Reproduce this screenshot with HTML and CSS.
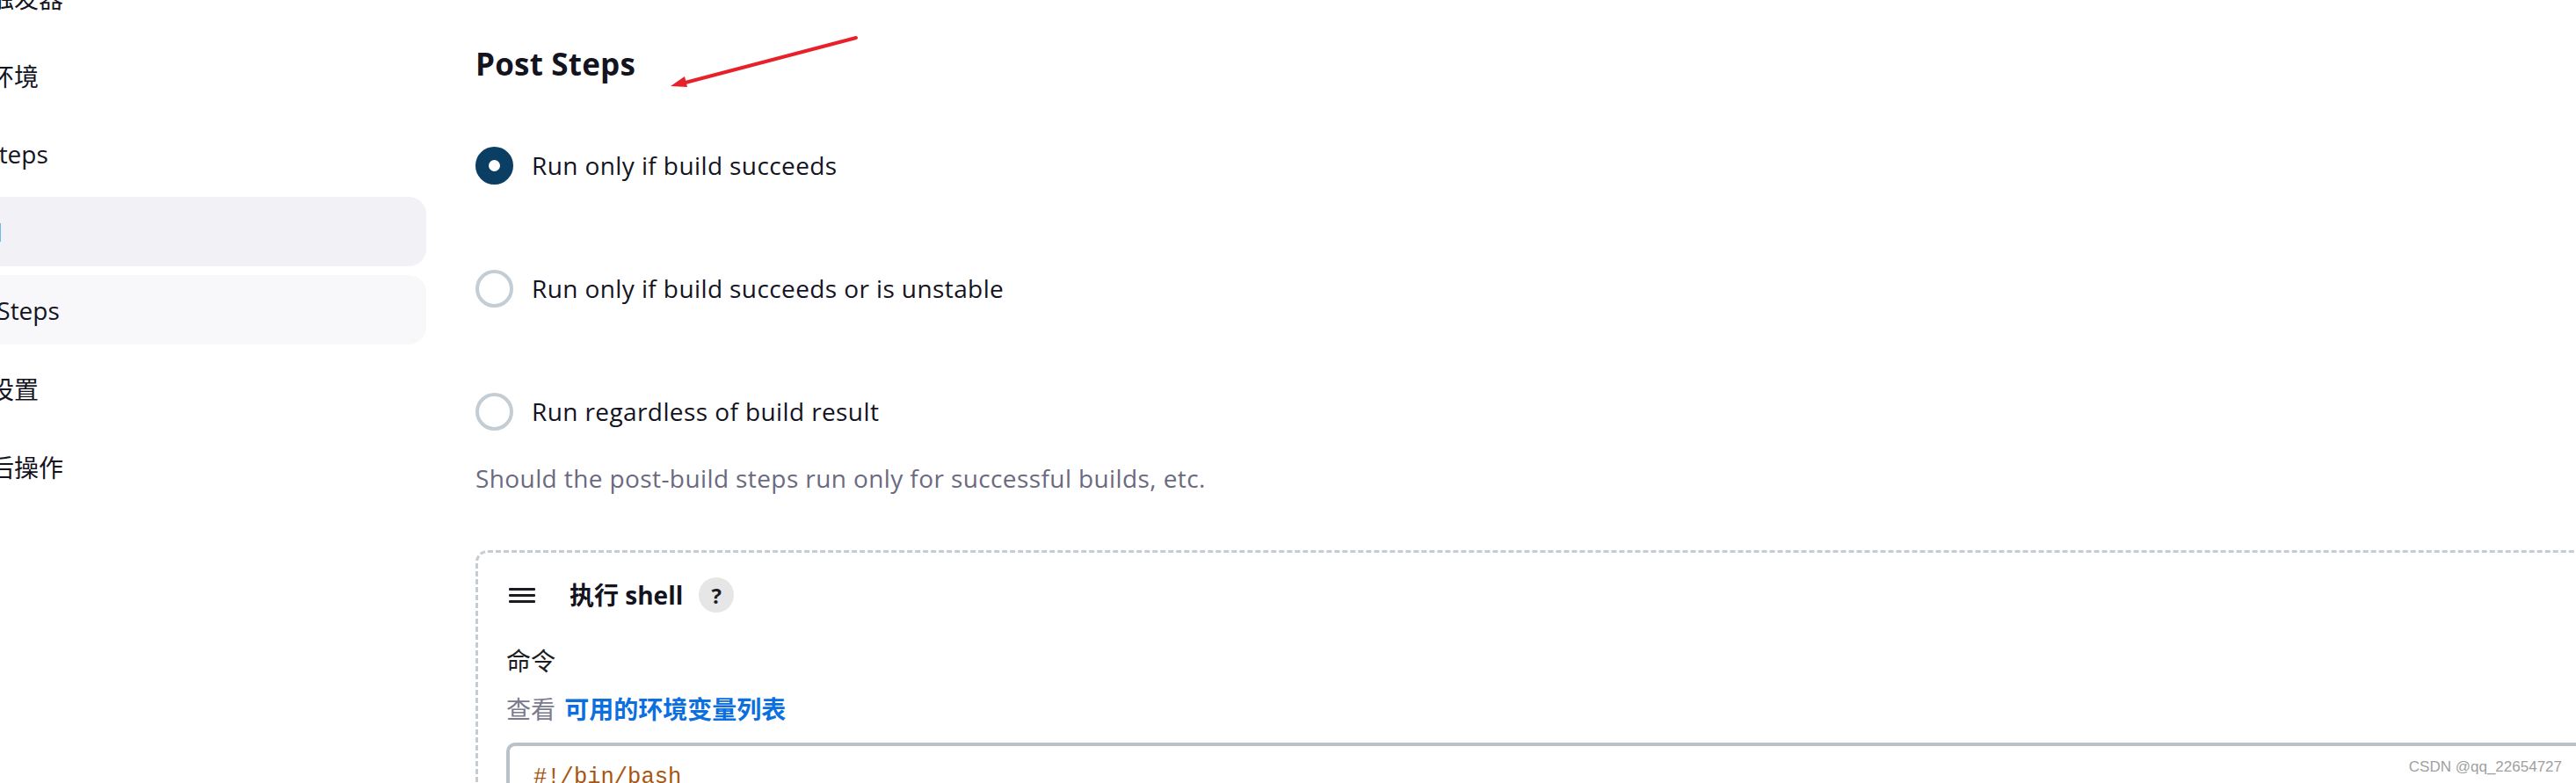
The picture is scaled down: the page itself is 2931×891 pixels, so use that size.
FILE: index.html
```html
<!DOCTYPE html>
<html lang="zh-CN">
<head>
<meta charset="utf-8">
<title>Post Steps</title>
<link rel="stylesheet" href="styles.css">
</head>
<body>
<div class="page">
  <nav class="sidebar">
    <a class="nav-item">构建触发器</a>
    <a class="nav-item">构建环境</a>
    <a class="nav-item">Pre Steps</a>
    <a class="nav-item nav-item--active nav-item--wide">Build</a>
    <a class="nav-item nav-item--hover">Post Steps</a>
    <a class="nav-item">构建设置</a>
    <a class="nav-item">构建后操作</a>
  </nav>

  <main class="content">
    <h2 class="section-title">Post Steps</h2>

    <div class="radio-list">
      <label class="radio-row"><span class="radio radio--checked"></span><span class="radio-text">Run only if build succeeds</span></label>
      <label class="radio-row"><span class="radio"></span><span class="radio-text">Run only if build succeeds or is unstable</span></label>
      <label class="radio-row"><span class="radio"></span><span class="radio-text">Run regardless of build result</span></label>
    </div>

    <p class="help-text">Should the post-build steps run only for successful builds, etc.</p>

    <section class="step-card">
      <div class="step-head">
        <svg class="drag-handle" viewBox="0 0 30 17" width="30" height="17" aria-hidden="true">
          <rect x="0" y="0" width="30" height="3" rx="1" fill="#1b1b22"/>
          <rect x="0" y="7" width="30" height="3" rx="1" fill="#1b1b22"/>
          <rect x="0" y="14" width="30" height="3" rx="1" fill="#1b1b22"/>
        </svg>
        <span class="step-title">执行 shell</span>
        <span class="help-btn">?</span>
      </div>
      <div class="field-label">命令</div>
      <div class="field-hint">查看 <a class="hint-link">可用的环境变量列表</a></div>
      <div class="code-box"><pre class="code">#!/bin/bash</pre></div>
    </section>
  </main>

  <svg class="annotation" viewBox="740 30 250 80" width="250" height="80" aria-hidden="true">
    <line x1="974" y1="43" x2="776" y2="95" stroke="#e8202a" stroke-width="4" stroke-linecap="round"/>
    <polygon points="763,98 782,99 779,87" fill="#e8202a"/>
  </svg>

  <div class="watermark">CSDN @qq_22654727</div>
</div>
</body>
</html>
```
FILE: styles.css
```css
* {
  box-sizing: border-box;
}

html,
body {
  margin: 0;
  padding: 0;
}

body {
  width: 2931px;
  height: 891px;
  overflow: hidden;
  background: #ffffff;
  font-family: "Open Sans", "Noto Sans CJK SC", sans-serif;
  color: #14141f;
}

.page {
  position: relative;
  display: flex;
  align-items: flex-start;
  height: 891px;
}

/* ---------- sidebar ---------- */
.sidebar {
  flex: 0 0 585px;
  margin-left: -100px;
  margin-top: -43px;
  display: flex;
  flex-direction: column;
  gap: 10px;
}

.nav-item {
  height: 79px;
  display: flex;
  align-items: center;
  padding-left: 32px;
  border-radius: 20px;
  font-size: 28px;
  color: #14141f;
  text-decoration: none;
  white-space: nowrap;
}

.nav-item--wide {
  letter-spacing: 1px;
}

.nav-item--active {
  background: #f1f1f6;
}

.nav-item--hover {
  background: #f8f8fa;
}

/* ---------- content ---------- */
.content {
  flex: 1 0 auto;
  margin-left: 56px;
  margin-right: -300px;
  padding-top: 51px;
}

.section-title {
  margin: 0;
  font-size: 35px;
  line-height: 44px;
  font-weight: 700;
  letter-spacing: 0.2px;
  color: #14141f;
}

.radio-list {
  margin-top: 72px;
  display: flex;
  flex-direction: column;
  gap: 97px;
}

.radio-row {
  display: flex;
  align-items: center;
  gap: 21px;
  height: 43px;
  font-size: 28px;
  line-height: 43px;
  letter-spacing: 0.4px;
  color: #14141f;
}

.radio {
  flex: none;
  width: 43px;
  height: 43px;
  border-radius: 50%;
  border: 4px solid #c3cdd3;
  background: #ffffff;
}

.radio--checked {
  border: 15.5px solid #0a3e62;
}

.help-text {
  margin: 34px 0 0;
  font-size: 28px;
  line-height: 40px;
  letter-spacing: 0.4px;
  color: #6b6a80;
}

/* ---------- step card ---------- */
.step-card {
  margin-top: 62px;
  border: 3px dashed #c5cdd3;
  border-radius: 14px;
  padding: 28px 0 0 32px;
  height: 400px;
}

.step-head {
  display: flex;
  align-items: center;
  height: 40px;
}

.drag-handle {
  flex: none;
  margin-left: 3px;
  margin-right: 39px;
}

.step-title {
  font-size: 28px;
  font-weight: 700;
  line-height: 40px;
  color: #14141f;
}

.help-btn {
  flex: none;
  width: 40px;
  height: 40px;
  margin-left: 18px;
  border-radius: 50%;
  background: #e6e6e6;
  display: flex;
  align-items: center;
  justify-content: center;
  font-size: 24px;
  font-weight: 700;
  color: #1b1b22;
}

.field-label {
  margin-top: 35px;
  font-size: 28px;
  line-height: 40px;
  color: #1b1b22;
}

.field-hint {
  margin-top: 15px;
  font-size: 28px;
  line-height: 40px;
  color: #7b7b8e;
}

.hint-link {
  margin-left: 3px;
  font-weight: 700;
  color: #0b6fe0;
  text-decoration: none;
}

.code-box {
  margin-top: 18px;
  border: 4px solid #b8c2c8;
  border-radius: 10px;
  padding: 17px 27px;
  height: 200px;
}

.code {
  margin: 0;
  font-family: "Liberation Mono", monospace;
  font-size: 25.5px;
  line-height: 38px;
  color: #a8550f;
}

/* ---------- overlays ---------- */
.annotation {
  position: absolute;
  left: 740px;
  top: 30px;
}

.watermark {
  position: absolute;
  right: 16px;
  bottom: 8px;
  font-family: "Liberation Sans", Arial, sans-serif;
  font-size: 17px;
  line-height: 20px;
  color: #a0a0a0;
}
```
